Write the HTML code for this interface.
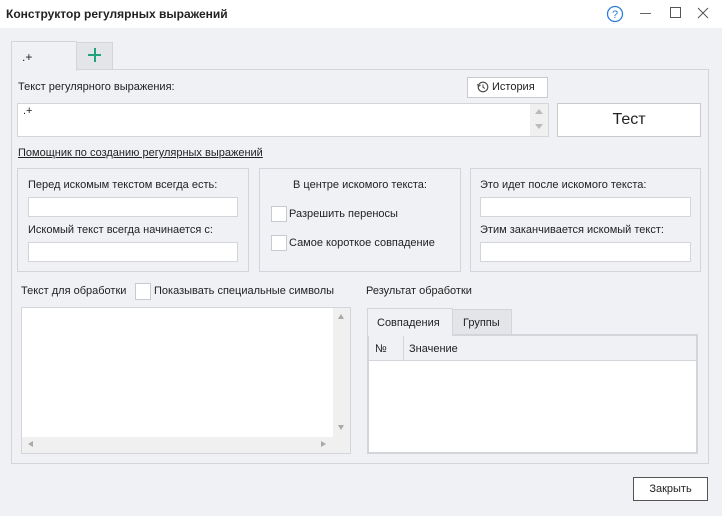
<!DOCTYPE html>
<html><head><meta charset="utf-8"><style>
*{box-sizing:border-box;margin:0;padding:0}
body{width:722px;height:516px;background:#f0f1f5;font-family:"Liberation Sans",sans-serif;font-size:11px;color:#222;position:relative;overflow:hidden}
.a{position:absolute}
.in{position:absolute;background:#fff;border:1px solid #d3d5db}
.lbl{position:absolute;white-space:nowrap;line-height:14px}
.btn{position:absolute;background:#fff;border:1px solid #c8cad0;text-align:center}
.cb{position:absolute;width:16px;height:16px;background:#fff;border:1px solid #c8cad0}
.grp{position:absolute;border:1px solid #d3d5db}
.tri{position:absolute;width:0;height:0}
</style></head><body>
<div class="a" style="left:0;top:0;width:722px;height:28px;background:#fff"></div>
<div class="lbl" style="left:6px;top:7px;font-weight:bold;font-size:12px">Конструктор регулярных выражений</div>
<svg class="a" style="left:606px;top:5px" width="18" height="18" viewBox="0 0 18 18"><circle cx="9" cy="9" r="7.5" fill="none" stroke="#2e7be0" stroke-width="1.3"/><text x="9" y="13" text-anchor="middle" font-size="11" fill="#2e7be0" font-family="Liberation Sans">?</text></svg>
<div class="a" style="left:640px;top:13px;width:11px;height:1px;background:#666"></div>
<div class="a" style="left:670px;top:7px;width:11px;height:11px;border:1px solid #555"></div>
<svg class="a" style="left:697px;top:7px" width="12" height="12"><path d="M1 1L11 11M11 1L1 11" stroke="#555" stroke-width="1"/></svg>

<div class="a" style="left:11px;top:69px;width:698px;height:395px;border:1px solid #d3d5db"></div>
<div class="a" style="left:11px;top:41px;width:66px;height:30px;border:1px solid #d3d5db;border-bottom:none;background:#f0f1f5"></div>
<div class="lbl" style="left:22px;top:50px;font-size:12px">.+</div>
<div class="a" style="left:77px;top:42px;width:36px;height:28px;border:1px solid #d3d5db;border-left:none;background:#e4e5e9"></div>
<div class="a" style="left:88px;top:54px;width:13px;height:2px;background:#1fa37a"></div>
<div class="a" style="left:93.5px;top:48px;width:2px;height:14px;background:#1fa37a"></div>

<div class="lbl" style="left:18px;top:80px">Текст регулярного выражения:</div>
<div class="btn" style="left:467px;top:77px;width:81px;height:21px"></div>
<svg class="a" style="left:477px;top:81px" width="12" height="12"><circle cx="6" cy="6" r="4.8" fill="none" stroke="#444" stroke-width="1.1"/><path d="M6 3.5V6.2L7.8 7.5" stroke="#444" fill="none"/><path d="M0.5 3L1.5 5.5L3.6 4" stroke="#444" fill="none"/></svg>
<div class="lbl" style="left:492px;top:80px">История</div>

<div class="in" style="left:17px;top:103px;width:532px;height:34px"></div>
<div class="a" style="left:530px;top:104px;width:18px;height:32px;background:#f0f0f0"></div>
<div class="tri" style="left:535px;top:109px;border:4px solid transparent;border-bottom:5px solid #bbb;border-top:none"></div>
<div class="tri" style="left:535px;top:124px;border:4px solid transparent;border-top:5px solid #bbb;border-bottom:none"></div>
<div class="lbl" style="left:23px;top:104px">.+</div>
<div class="btn" style="left:557px;top:103px;width:144px;height:34px;font-size:16px;line-height:32px">Тест</div>

<div class="lbl" style="left:18px;top:146px;text-decoration:underline">Помощник по созданию регулярных выражений</div>

<div class="grp" style="left:17px;top:168px;width:232px;height:104px"></div>
<div class="lbl" style="left:28px;top:178px">Перед искомым текстом всегда есть:</div>
<div class="in" style="left:28px;top:197px;width:210px;height:20px"></div>
<div class="lbl" style="left:28px;top:223px">Искомый текст всегда начинается с:</div>
<div class="in" style="left:28px;top:242px;width:210px;height:20px"></div>

<div class="grp" style="left:259px;top:168px;width:202px;height:104px"></div>
<div class="lbl" style="left:259px;width:202px;text-align:center;top:178px">В центре искомого текста:</div>
<div class="cb" style="left:271px;top:206px"></div>
<div class="lbl" style="left:289px;top:207px">Разрешить переносы</div>
<div class="cb" style="left:271px;top:235px"></div>
<div class="lbl" style="left:289px;top:236px">Самое короткое совпадение</div>

<div class="grp" style="left:470px;top:168px;width:231px;height:104px"></div>
<div class="lbl" style="left:480px;top:178px">Это идет после искомого текста:</div>
<div class="in" style="left:480px;top:197px;width:211px;height:20px"></div>
<div class="lbl" style="left:480px;top:223px">Этим заканчивается искомый текст:</div>
<div class="in" style="left:480px;top:242px;width:211px;height:20px"></div>

<div class="lbl" style="left:21px;top:284px">Текст для обработки</div>
<div class="cb" style="left:135px;top:283px;height:17px"></div>
<div class="lbl" style="left:154px;top:284px">Показывать специальные символы</div>
<div class="in" style="left:21px;top:307px;width:330px;height:147px"></div>
<div class="a" style="left:333px;top:308px;width:17px;height:145px;background:#f0f0f0"></div>
<div class="a" style="left:22px;top:437px;width:311px;height:16px;background:#f0f0f0"></div>
<div class="tri" style="left:338px;top:314px;border:3.5px solid transparent;border-bottom:5px solid #aaa;border-top:none"></div>
<div class="tri" style="left:338px;top:425px;border:3.5px solid transparent;border-top:5px solid #aaa;border-bottom:none"></div>
<div class="tri" style="left:28px;top:441px;border:3.5px solid transparent;border-right:5px solid #aaa;border-left:none"></div>
<div class="tri" style="left:321px;top:441px;border:3.5px solid transparent;border-left:5px solid #aaa;border-right:none"></div>

<div class="lbl" style="left:366px;top:284px">Результат обработки</div>
<div class="a" style="left:367px;top:334px;width:331px;height:120px;border:2px solid #d3d5db;background:#fff"></div>
<div class="a" style="left:369px;top:336px;width:327px;height:25px;background:#f0f1f5;border-bottom:1px solid #d3d5db"></div>
<div class="a" style="left:403px;top:336px;width:1px;height:24px;background:#d3d5db"></div>
<div class="lbl" style="left:375px;top:342px">№</div>
<div class="lbl" style="left:409px;top:342px">Значение</div>
<div class="a" style="left:367px;top:308px;width:86px;height:28px;border:1px solid #d3d5db;border-bottom:none;background:#f0f1f5"></div>
<div class="lbl" style="left:377px;top:316px">Совпадения</div>
<div class="a" style="left:453px;top:309px;width:59px;height:26px;border:1px solid #d3d5db;border-left:none;background:#e4e5e9"></div>
<div class="lbl" style="left:463px;top:316px">Группы</div>

<div class="btn" style="left:633px;top:477px;width:75px;height:24px;border-color:#555;line-height:22px">Закрыть</div>
</body></html>
